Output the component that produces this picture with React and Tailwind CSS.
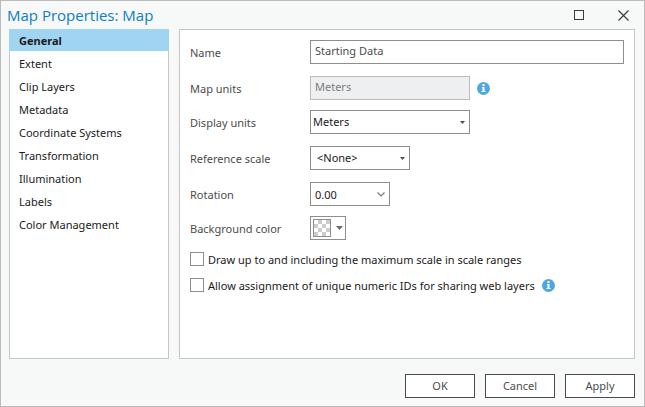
import { useState } from 'react';

const pages = [
  'General',
  'Extent',
  'Clip Layers',
  'Metadata',
  'Coordinate Systems',
  'Transformation',
  'Illumination',
  'Labels',
  'Color Management',
];

function InfoButton({ label }) {
  return (
    <button type="button" aria-label={label} className="ml-[7px] shrink-0">
      <svg viewBox="0 0 13 13" className="block size-[13px]">
        <circle cx="6.5" cy="6.5" r="6.5" fill="#4ea8dc" />
        <path d="M5.5 2h2v2h-2zM5 5h2.5v4H8.500v1h-4V9H5.500V6H5z" fill="#fff" />
      </svg>
    </button>
  );
}

function Caret({ className }) {
  return (
    <svg viewBox="0 0 5 3" className={`pointer-events-none absolute h-[3px] w-[5px] ${className}`}>
      <path d="M0 0h5L2.5 3z" fill="#4c4c4c" />
    </svg>
  );
}

function Field({ id, label, className = 'mt-3', children }) {
  return (
    <div className={`flex h-6 items-center ${className}`}>
      <label htmlFor={id} className="w-[120px] shrink-0 pt-[2px] text-[#4c4c4c]">
        {label}
      </label>
      {children}
    </div>
  );
}

function CheckRow({ id, label, children }) {
  return (
    <div className="mt-3 flex h-[14px] items-center">
      <input
        id={id}
        type="checkbox"
        className="size-[14px] shrink-0 appearance-none border border-[#8e8e90] bg-white checked:bg-[#4ea8dc]"
      />
      <label htmlFor={id} className="pt-[2px] pl-1 whitespace-nowrap text-[#1a1a1a]">
        {label}
      </label>
      {children}
    </div>
  );
}

function FooterButton({ children }) {
  return (
    <button type="button" className="h-6 w-[70px] border border-[#4c4c4c] bg-white text-[#4c4c4c]">
      {children}
    </button>
  );
}

export default function App() {
  const [active, setActive] = useState('General');

  return (
    <div className="flex min-h-screen flex-col border border-[#bcbcbc] bg-[#f7f8f8] pr-[9px] pb-2 font-['Noto_Sans','Open_Sans',sans-serif] text-[11px] leading-4 text-[#1a1a1a]">
      <header className="flex h-7 items-center justify-between pl-[6px]">
        <h1 className="font-['Open_Sans','Noto_Sans',sans-serif] text-[15px] leading-6 text-[#0f7dc2]">
          Map Properties: Map
        </h1>
        <div className="flex items-center gap-[34px] pr-[6px]">
          <button type="button" aria-label="Maximize">
            <svg viewBox="0 0 10 10" className="block size-[10px]">
              <rect x=".5" y=".5" width="9" height="9" fill="none" stroke="#3c3c3c" />
            </svg>
          </button>
          <button type="button" aria-label="Close">
            <svg viewBox="0 0 11 11" className="block size-[11px]">
              <path d="M.5.5l10 10M10.5.5l-10 10" stroke="#3c3c3c" strokeWidth="1.2" />
            </svg>
          </button>
        </div>
      </header>

      <div className="flex flex-1 gap-[10px] pl-2">
        <nav className="w-[160px] shrink-0 border border-[#c6c6c6] bg-white">
          <ul className="-mx-px -mt-px flex flex-col gap-px">
            {pages.map((page) => (
              <li key={page}>
                <button
                  type="button"
                  onClick={() => setActive(page)}
                  className={`block h-[22px] w-full pt-[2px] pl-[10px] text-left ${
                    page === active ? 'bg-[#9fd4f3] font-bold' : ''
                  }`}
                >
                  {page}
                </button>
              </li>
            ))}
          </ul>
        </nav>

        <main className="min-w-0 flex-1 border border-[#c6c6c6] bg-white p-[10px]">
          <Field id="name" label="Name" className="">
            <input
              id="name"
              defaultValue="Starting Data"
              className="h-6 w-full min-w-0 border border-[#8e8e90] bg-white px-1 pb-1 text-[#4c4c4c]"
            />
          </Field>
          <Field id="map-units" label="Map units">
            <input
              id="map-units"
              disabled
              defaultValue="Meters"
              className="h-6 w-[160px] border border-[#bcbcbe] bg-[#eeeff1] px-1 pb-1 text-[#7c7c7c]"
            />
            <InfoButton label="About map units" />
          </Field>
          <Field id="display-units" label="Display units" className="mt-[10px]">
            <div className="relative">
              <select
                id="display-units"
                className="block h-6 w-[160px] appearance-none border border-[#8e8e90] bg-white pl-[2px]"
              >
                <option>Meters</option>
              </select>
              <Caret className="top-[11px] right-[5px]" />
            </div>
          </Field>
          <Field id="reference-scale" label="Reference scale">
            <div className="relative">
              <select
                id="reference-scale"
                className="block h-6 w-[100px] appearance-none border border-[#8e8e90] bg-white pl-[6px]"
              >
                <option>&lt;None&gt;</option>
              </select>
              <Caret className="top-[11px] right-[5px]" />
            </div>
          </Field>
          <Field id="rotation" label="Rotation">
            <div className="flex h-6 w-[80px] items-center border border-[#8e8e90] bg-white pr-1">
              <input id="rotation" defaultValue="0.00" className="min-w-0 flex-1 pt-[2px] pl-1" />
              <button type="button" aria-label="Rotation presets">
                <svg viewBox="0 0 8 5" className="block h-[5px] w-2">
                  <path d="M.5.5L4 4 7.5.5" fill="none" stroke="#777" strokeWidth="1.2" />
                </svg>
              </button>
            </div>
          </Field>
          <Field id="background" label="Background color" className="mt-[10px]">
            <button
              id="background"
              type="button"
              className="flex h-6 w-9 items-center gap-[5px] border border-[#8e8e90] bg-white pl-[2px]"
            >
              <svg viewBox="0 0 18 18" className="block size-[18px]">
                <defs>
                  <pattern id="checks" x="1" y="1" width="8" height="8" patternUnits="userSpaceOnUse">
                    <path d="M4 0h4v4H4zM0 4h4v4H0z" fill="#ccc" />
                  </pattern>
                </defs>
                <rect x=".5" y=".5" width="17" height="17" fill="#fff" />
                <rect x=".5" y=".5" width="17" height="17" fill="url(#checks)" stroke="#8e8e90" />
              </svg>
              <svg viewBox="0 0 7 4" className="block h-1 w-[7px]">
                <path d="M0 0h7L3.5 4z" fill="#6c6c6c" />
              </svg>
            </button>
          </Field>
          <CheckRow id="max-scale" label="Draw up to and including the maximum scale in scale ranges" />
          <CheckRow id="unique-ids" label="Allow assignment of unique numeric IDs for sharing web layers">
            <InfoButton label="About unique numeric IDs" />
          </CheckRow>
        </main>
      </div>

      <footer className="mt-[15px] flex justify-end gap-[10px]">
        <FooterButton>OK</FooterButton>
        <FooterButton>Cancel</FooterButton>
        <FooterButton>Apply</FooterButton>
      </footer>
    </div>
  );
}
